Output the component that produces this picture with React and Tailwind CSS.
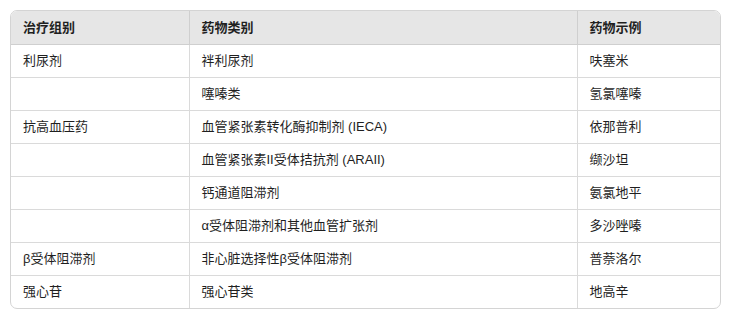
const rows = [
  ['利尿剂', '袢利尿剂', '呋塞米'],
  ['', '噻嗪类', '氢氯噻嗪'],
  ['抗高血压药', '血管紧张素转化酶抑制剂 (IECA)', '依那普利'],
  ['', '血管紧张素II受体拮抗剂 (ARAII)', '缬沙坦'],
  ['', '钙通道阻滞剂', '氨氯地平'],
  ['', 'α受体阻滞剂和其他血管扩张剂', '多沙唑嗪'],
  ['β受体阻滞剂', '非心脏选择性β受体阻滞剂', '普萘洛尔'],
  ['强心苷', '强心苷类', '地高辛'],
]

const headers = ['治疗组别', '药物类别', '药物示例']

export default function App() {
  return (
    <div className="bg-white w-[740px] h-[313px] pt-[10px] pl-[10px] font-['Liberation_Sans','Noto_Sans_CJK_SC',sans-serif] text-[13px] text-[#1f1f1f]">
      <div className="w-[711px] border border-[#d4d4d4] rounded-[7px] overflow-hidden">
        <table className="w-full border-collapse table-fixed">
          <colgroup>
            <col className="w-[178px]" />
            <col className="w-[388px]" />
            <col />
          </colgroup>
          <thead>
            <tr className="bg-[#e6e6e6] h-[33px]">
              {headers.map((h, i) => (
                <th
                  key={h}
                  className={`text-left font-bold px-3 border-b border-[#cfcfcf] ${i < 2 ? 'border-r' : ''}`}
                >
                  {h}
                </th>
              ))}
            </tr>
          </thead>
          <tbody>
            {rows.map((r, ri) => (
              <tr key={ri} className="h-[33px]">
                {r.map((c, ci) => (
                  <td
                    key={ci}
                    className={`px-3 border-[#dadada] ${ri < rows.length - 1 ? 'border-b' : ''} ${ci < 2 ? 'border-r' : ''}`}
                  >
                    {c}
                  </td>
                ))}
              </tr>
            ))}
          </tbody>
        </table>
      </div>
    </div>
  )
}
